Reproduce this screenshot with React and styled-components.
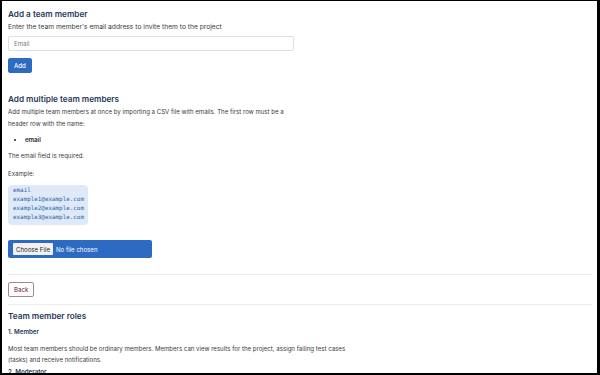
import React from 'react'
import styled, { createGlobalStyle } from 'styled-components'

const GlobalStyle = createGlobalStyle`
  html, body {
    margin: 0;
    padding: 0;
    background: #fff;
  }
  body {
    font-family: Inter, "Noto Sans", sans-serif;
    color: #333;
  }
  * {
    box-sizing: border-box;
  }
`

const Frame = styled.div`
  width: 600px;
  height: 375px;
  overflow: hidden;
  display: flex;
  flex-direction: column;
  border-style: solid;
  border-color: #000;
  border-width: 1px 3px 2px 2px;
  padding: 7px 5px 0 6px;
`

const Section = styled.section`
  width: ${p => p.$width || 'auto'};
  display: flex;
  flex-direction: column;
  flex-shrink: 0;
`

const Heading = styled.h2`
  margin: ${p => p.$margin || '0'};
  font-size: 8.2px;
  line-height: 13px;
  font-weight: 600;
  color: #1f3a5c;
`

const SubHeading = styled.h3`
  margin: ${p => p.$margin || '0'};
  font-size: 6.2px;
  line-height: 10px;
  font-weight: 600;
  color: #1f3a5c;
`

const Lead = styled.p`
  margin: 0;
  font-size: 6.7px;
  line-height: 12px;
  color: #3a3a3a;
`

const Text = styled.p`
  margin: ${p => p.$margin || '0'};
  font-size: 6.1px;
  line-height: ${p => p.$lh || '12px'};
  color: #3a3a3a;
`

const EmailInput = styled.input`
  width: 100%;
  height: 15px;
  margin-top: 3px;
  padding: 0 5px;
  border: 1px solid #dcdfe3;
  border-radius: 2px;
  font-family: inherit;
  font-size: 6.1px;
  color: #333;
  outline: none;

  &::placeholder {
    color: #777;
  }
`

const Button = styled.button`
  align-self: flex-start;
  flex-shrink: 0;
  height: 15px;
  margin: ${p => p.$margin || '0'};
  padding: 0 5px;
  border-radius: 2px;
  font-family: inherit;
  font-size: 6.1px;
  cursor: pointer;
  border: 1px solid ${p => (p.$variant === 'outline' ? '#a08a8e' : '#2c6bc1')};
  background: ${p => (p.$variant === 'outline' ? '#fff' : '#2c6bc1')};
  color: ${p => (p.$variant === 'outline' ? '#5e1d2c' : '#fff')};
  font-weight: ${p => (p.$variant === 'outline' ? 400 : 500)};
`

const BulletList = styled.ul`
  margin: 3.5px 0 5.5px;
  padding-left: 17px;
  font-size: 6.1px;
  line-height: 11px;
  font-weight: 600;
  color: #222;
`

const CodeBlock = styled.pre`
  align-self: flex-start;
  margin: 5px 0 0;
  padding: 1px 5px 3px;
  width: 80px;
  border-radius: 4px;
  background: #deeaf8;
  color: #2e62a8;
  font-family: "DejaVu Sans Mono", "Liberation Mono", monospace;
  font-size: 5.9px;
  line-height: 9.1px;
`

const FileInput = styled.input`
  align-self: flex-start;
  width: 144px;
  height: 18px;
  margin-top: 15px;
  padding: 3px 5px;
  border-radius: 2px;
  background: #2c6bc1;
  color: #fff;
  font-family: inherit;
  font-size: 6.1px;

  &::file-selector-button {
    height: 12px;
    margin-right: 3px;
    padding: 0 3px;
    border: none;
    border-radius: 1px;
    background: #f1f1f1;
    color: #222;
    font-family: inherit;
    font-size: 6.1px;
  }
`

const Divider = styled.hr`
  width: 100%;
  flex-shrink: 0;
  margin: ${p => p.$margin || '0'};
  border: none;
  border-top: 1px solid #ebedf0;
`

const App = () => {
  return (
    <Frame>
      <GlobalStyle />
      <Section $width="286px">
        <Heading>Add a team member</Heading>
        <Lead>Enter the team member's email address to invite them to the project</Lead>
        <EmailInput type="email" placeholder="Email" />
        <Button $margin="7px 0 0">Add</Button>

        <Heading $margin="20px 0 0">Add multiple team members</Heading>
        <Text>
          Add multiple team members at once by importing a CSV file with emails. The first row must be a
          header row with the name:
        </Text>
        <BulletList>
          <li>email</li>
        </BulletList>
        <Text>The email field is required.</Text>
        <Text $margin="6px 0 0">Example:</Text>
        <CodeBlock>{`email
example1@example.com
example2@example.com
example3@example.com`}</CodeBlock>
        <FileInput type="file" />
      </Section>

      <Divider $margin="16px 0 7px" />
      <Button $variant="outline">Back</Button>
      <Divider $margin="7px 0 4.5px" />

      <Section $width="345px">
        <Heading>Team member roles</Heading>
        <SubHeading $margin="4.5px 0 0">1. Member</SubHeading>
        <Text $margin="5.5px 0 0" $lh="11px">
          Most team members should be ordinary members. Members can view results for the project, assign failing test cases
          (tasks) and receive notifications.
        </Text>
        <SubHeading $margin="2.5px 0 0">2. Moderator</SubHeading>
      </Section>
    </Frame>
  )
}

export default App
